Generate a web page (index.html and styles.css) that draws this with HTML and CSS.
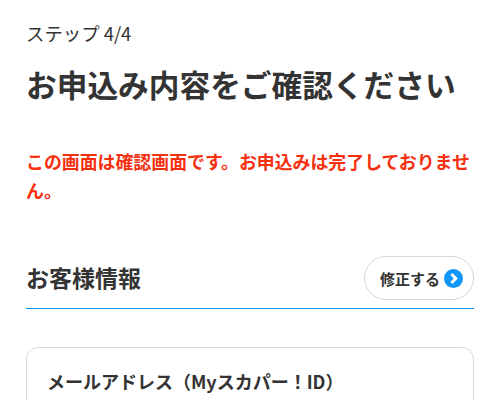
FILE: index.html
```html
<!DOCTYPE html>
<html lang="ja">
<head>
    <meta charset="UTF-8">
    <meta name="viewport" content="width=device-width, initial-scale=1.0">
    <title>お申込み内容をご確認ください</title>
    <link rel="stylesheet" href="styles.css">
</head>
<body>
    <div class="container">
        <p class="step">ステップ 4/4</p>
        <h1>お申込み内容をご確認ください</h1>
        <p class="notice">この画面は確認画面です。お申込みは完了しておりません。</p>

        <div class="section-head">
            <h2>お客様情報</h2>
            <a class="edit-btn" href="#">
                修正する
                <svg class="edit-icon" width="19" height="19" viewBox="0 0 19 19">
                    <circle cx="9.5" cy="9.5" r="9.5" fill="#0f96fa"/>
                    <path d="M7.4 5 L11.8 9.5 L7.4 14" fill="none" stroke="#fff" stroke-width="3"/>
                </svg>
            </a>
        </div>

        <div class="card">
            <h3>メールアドレス（Myスカパー！ID）</h3>
        </div>
    </div>
</body>
</html>
```

FILE: styles.css
```css
* {
    margin: 0;
    padding: 0;
    box-sizing: border-box;
    font-family: "Noto Sans CJK JP", "Noto Sans", sans-serif;
}

html, body {
    height: 400px;
    overflow: hidden;
    background-color: #fff;
}

.container {
    height: 400px;
    overflow: hidden;
    padding: 21px 26px 0 26px;
    color: #333;
}

.step {
    font-size: 18.4px;
    line-height: 25px;
}

h1 {
    font-size: 30.7px;
    line-height: 44px;
    font-weight: 700;
    margin-top: 16px;
    white-space: nowrap;
}

.notice {
    color: #f5300f;
    font-size: 17.9px;
    line-height: 29px;
    font-weight: 700;
    margin-top: 41px;
}

.section-head {
    display: flex;
    justify-content: space-between;
    align-items: center;
    margin-top: 51px;
    padding-bottom: 8px;
    border-bottom: 1.5px solid #1496f5;
}

h2 {
    font-size: 23px;
    line-height: 32px;
    font-weight: 700;
    margin-bottom: 2px;
}

.edit-btn {
    display: flex;
    align-items: center;
    gap: 4px;
    height: 44px;
    padding: 0 10px 0 15px;
    border: 1.5px solid #d8d8d8;
    border-radius: 22px;
    color: #333;
    font-size: 15px;
    font-weight: 700;
    text-decoration: none;
}

.card {
    margin-top: 38px;
    border: 1.5px solid #d8d8d8;
    border-radius: 12px;
    padding: 20px;
    height: 120px;
}

h3 {
    font-size: 18px;
    line-height: 27px;
    font-weight: 700;
}
```
